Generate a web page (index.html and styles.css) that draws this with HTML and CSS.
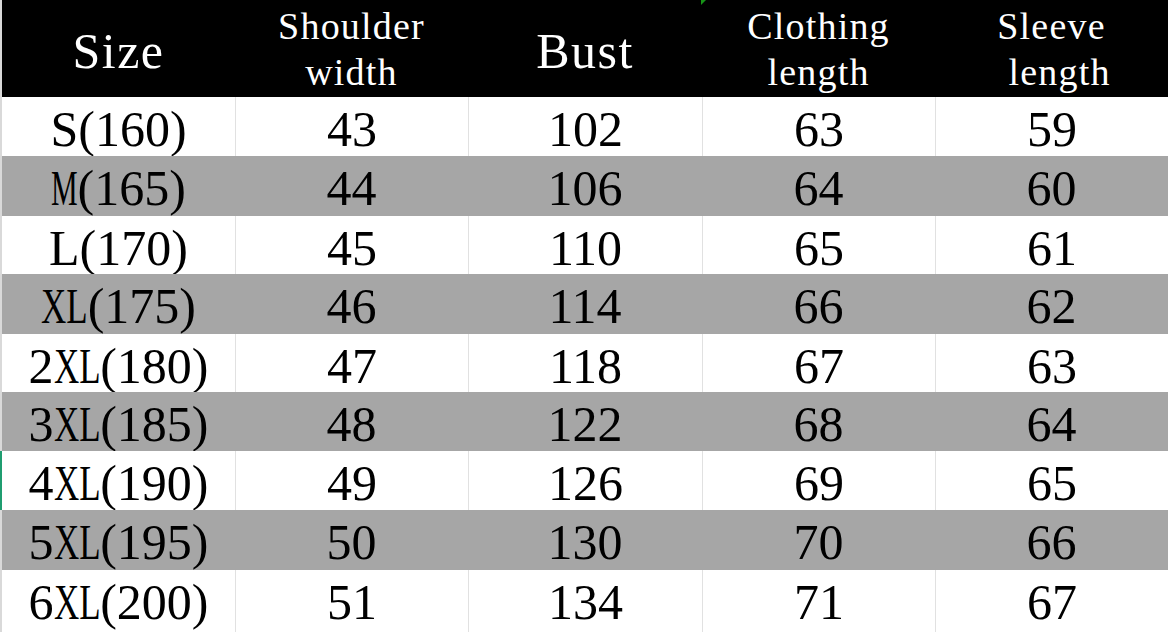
FILE: index.html
```html
<!DOCTYPE html>
<html lang="en">
<head>
<meta charset="utf-8">
<title>Size chart</title>
<link rel="stylesheet" href="styles.css">
</head>
<body>
<div class="sheet">
  <div class="strip"><div class="sel"></div></div>
  <div class="table">
    <div class="row head">
      <div class="c big">Size</div>
      <div class="c two"><span>Shoulder</span><span>width</span></div>
      <div class="c big">Bust</div>
      <div class="c two marked"><span>Clothing</span><span>length</span><i class="tri"></i></div>
      <div class="c two"><span>Sleeve</span><span class="shift">length</span></div>
    </div>
    <div class="row w"><div class="c">S(160)</div><div class="c">43</div><div class="c">102</div><div class="c">63</div><div class="c">59</div></div>
    <div class="row g"><div class="c"><span class="m">M</span>(165)</div><div class="c">44</div><div class="c">106</div><div class="c">64</div><div class="c">60</div></div>
    <div class="row w"><div class="c">L(170)</div><div class="c">45</div><div class="c">110</div><div class="c">65</div><div class="c">61</div></div>
    <div class="row g"><div class="c"><span class="xl">XL</span>(175)</div><div class="c">46</div><div class="c">114</div><div class="c">66</div><div class="c">62</div></div>
    <div class="row w"><div class="c">2<span class="xl">XL</span>(180)</div><div class="c">47</div><div class="c">118</div><div class="c">67</div><div class="c">63</div></div>
    <div class="row g"><div class="c">3<span class="xl">XL</span>(185)</div><div class="c">48</div><div class="c">122</div><div class="c">68</div><div class="c">64</div></div>
    <div class="row w"><div class="c">4<span class="xl">XL</span>(190)</div><div class="c">49</div><div class="c">126</div><div class="c">69</div><div class="c">65</div></div>
    <div class="row g"><div class="c">5<span class="xl">XL</span>(195)</div><div class="c">50</div><div class="c">130</div><div class="c">70</div><div class="c">66</div></div>
    <div class="row w"><div class="c">6<span class="xl">XL</span>(200)</div><div class="c">51</div><div class="c">134</div><div class="c">71</div><div class="c">67</div></div>
  </div>
</div>
</body>
</html>
```
FILE: styles.css
```css
html, body {
  margin: 0;
  padding: 0;
  background: #ffffff;
}
body {
  width: 1168px;
  height: 632px;
  overflow: hidden;
  font-family: "Liberation Serif", serif;
  color: #000;
}
.sheet {
  display: flex;
  height: 632px;
}
.strip {
  width: 2px;
  flex: none;
  background: #d9d9d9;
}
.sel {
  margin-top: 451px;
  height: 59px;
  background: #1f9d70;
}
.table {
  display: grid;
  grid-template-rows: 97px 59px 60px 58px 60px 58px 59px 59px 60px 62px;
  width: 1166px;
}
.row {
  display: grid;
  grid-template-columns: 233px 233px 234px 233px 233px;
}
.c {
  box-sizing: border-box;
  text-align: center;
  font-size: 50px;
  line-height: 52px;
  padding-top: 6px;
  white-space: nowrap;
}
.w { background: #ffffff; }
.g { background: #a6a6a6; }
.w .c + .c { border-left: 1px solid #e1e1e1; }

.head { background: #000; color: #fff; }
.head .c { position: relative; }
.head .big {
  padding-top: 26px;
  line-height: 50px;
  letter-spacing: 1.5px;
}
.head .two {
  display: flex;
  flex-direction: column;
  align-items: center;
  font-size: 38px;
  line-height: 46px;
  padding-top: 3px;
  letter-spacing: 1.2px;
}
.shift { margin-left: 16px; }
.tri {
  position: absolute;
  left: -1px;
  top: 0;
  width: 0;
  height: 0;
  border-top: 5px solid #179317;
  border-right: 5px solid transparent;
}
.xl {
  display: inline-block;
  transform: scaleX(0.7);
  margin: 0 -10px;
}
.m {
  display: inline-block;
  transform: scaleX(0.6);
  margin: 0 -9px;
}
```
